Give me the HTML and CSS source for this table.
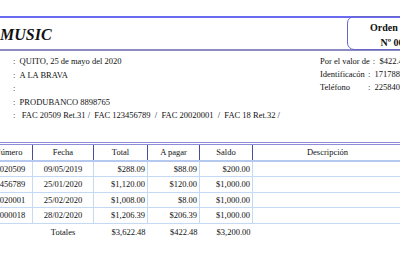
FILE: index.html
```html
<!DOCTYPE html>
<html>
<head>
<meta charset="utf-8">
<link rel="stylesheet" href="styles.css">
</head>
<body>
<div class="page">
  <div class="head">
    <div class="title">MUSIC</div>
    <div class="orden">
      <div class="orden-t">Orden de Pago</div>
      <div class="orden-n">Nº 000123</div>
    </div>
  </div>
  <div class="info">
    <div class="left">
      <div class="row">: &nbsp;QUITO, 25 de mayo del 2020</div>
      <div class="row">: &nbsp;A LA BRAVA</div>
      <div class="row">:</div>
      <div class="row">: &nbsp;PRODUBANCO 8898765</div>
      <div class="row">: &nbsp; FAC 20509 Ret.31 / &nbsp;FAC 123456789 &nbsp;/ &nbsp;FAC 20020001 &nbsp;/ &nbsp;FAC 18 Ret.32 /</div>
    </div>
    <div class="right">
      <div class="rrow"><span class="lab">Por el valor de</span><span>: &nbsp;$422.48</span></div>
      <div class="rrow"><span class="lab">Identificacón</span><span>: &nbsp;1717889900</span></div>
      <div class="rrow"><span class="lab">Teléfono</span><span>: &nbsp;2258400</span></div>
    </div>
  </div>
  <table class="tbl">
    <colgroup>
      <col class="c1"><col class="c2"><col class="c3"><col class="c4"><col class="c5"><col class="c6">
    </colgroup>
    <thead>
      <tr><th>Número</th><th>Fecha</th><th>Total</th><th>A pagar</th><th>Saldo</th><th>Descripción</th></tr>
    </thead>
    <tbody>
      <tr><td class="num">000020509</td><td class="ctr">09/05/2019</td><td class="r">$288.09</td><td class="r">$88.09</td><td class="r">$200.00</td><td></td></tr>
      <tr><td class="num">123456789</td><td class="ctr">25/01/2020</td><td class="r">$1,120.00</td><td class="r">$120.00</td><td class="r">$1,000.00</td><td></td></tr>
      <tr><td class="num">020020001</td><td class="ctr">25/02/2020</td><td class="r">$1,008.00</td><td class="r">$8.00</td><td class="r">$1,000.00</td><td></td></tr>
      <tr><td class="num">000000018</td><td class="ctr">28/02/2020</td><td class="r">$1,206.39</td><td class="r">$206.39</td><td class="r">$1,000.00</td><td></td></tr>
    </tbody>
    <tfoot>
      <tr><td></td><td class="ctr tot">Totales</td><td class="r">$3,622.48</td><td class="r">$422.48</td><td class="r">$3,200.00</td><td></td></tr>
    </tfoot>
  </table>
</div>
</body>
</html>
```
FILE: styles.css
```css
html, body {
  margin: 0;
  padding: 0;
  background: #fff;
  overflow: hidden;
}
body {
  width: 400px;
  height: 267px;
  font-family: "Liberation Serif", "Times New Roman", serif;
  color: #111;
}
.page {
  margin-left: -16px;
  width: 476px;
  padding-top: 16px;
}
.head {
  display: flex;
  align-items: stretch;
  height: 35px;
  border-top: 2px solid #6a6af0;
  border-bottom: 2px solid #8c8cc0;
  box-sizing: border-box;
}
.title {
  flex: 1;
  padding-left: 16px;
  font-weight: bold;
  font-style: italic;
  font-size: 16px;
  line-height: 33px;
  color: #111;
}
.orden {
  width: 110px;
  margin-right: 3px;
  margin-top: -2px;
  margin-bottom: -1px;
  border: 1.5px solid #6868cc;
  border-radius: 7px;
  text-align: center;
  font-weight: bold;
  font-size: 10px;
  line-height: 15px;
  padding-top: 3px;
  box-sizing: border-box;
}
.info {
  display: flex;
  font-size: 8.5px;
  padding-top: 4px;
}
.left {
  width: 336px;
  box-sizing: border-box;
  padding-left: 29px;
}
.row {
  height: 13.5px;
  line-height: 13.5px;
  white-space: nowrap;
}
.right {
  flex: 1;
}
.rrow {
  height: 13px;
  line-height: 13.5px;
  white-space: nowrap;
}
.lab {
  display: inline-block;
  min-width: 45px;
  padding-right: 3px;
}
.tbl {
  margin-top: 19px;
  border-collapse: collapse;
  table-layout: fixed;
  width: 418px;
  font-family: "Liberation Serif", serif;
  font-size: 8.5px;
}
.c1 { width: 48px; }
.c2 { width: 61px; }
.c3 { width: 54px; }
.c4 { width: 52px; }
.c5 { width: 53px; }
.c6 { width: 150px; }
.tbl thead tr {
  border-top: 3px double #8e8ed8;
}
.tbl th {
  font-weight: normal;
  height: 15px;
  padding: 0;
  border-left: 1.5px solid #4c4c98;
  border-right: 1.5px solid #4c4c98;
  border-bottom: 2px solid #b4c8f0;
  text-align: center;
}
.tbl tbody td {
  height: 14.5px;
  padding: 0 2px;
  border: 1px solid #c4daf4;
  white-space: nowrap;
  overflow: hidden;
}
.tbl tfoot td {
  height: 16px;
  padding: 0 2px;
  border: none;
  white-space: nowrap;
}
.num { text-align: left; }
.ctr { text-align: center; }
.r { text-align: right; }
.tot { font-weight: normal; }
```
